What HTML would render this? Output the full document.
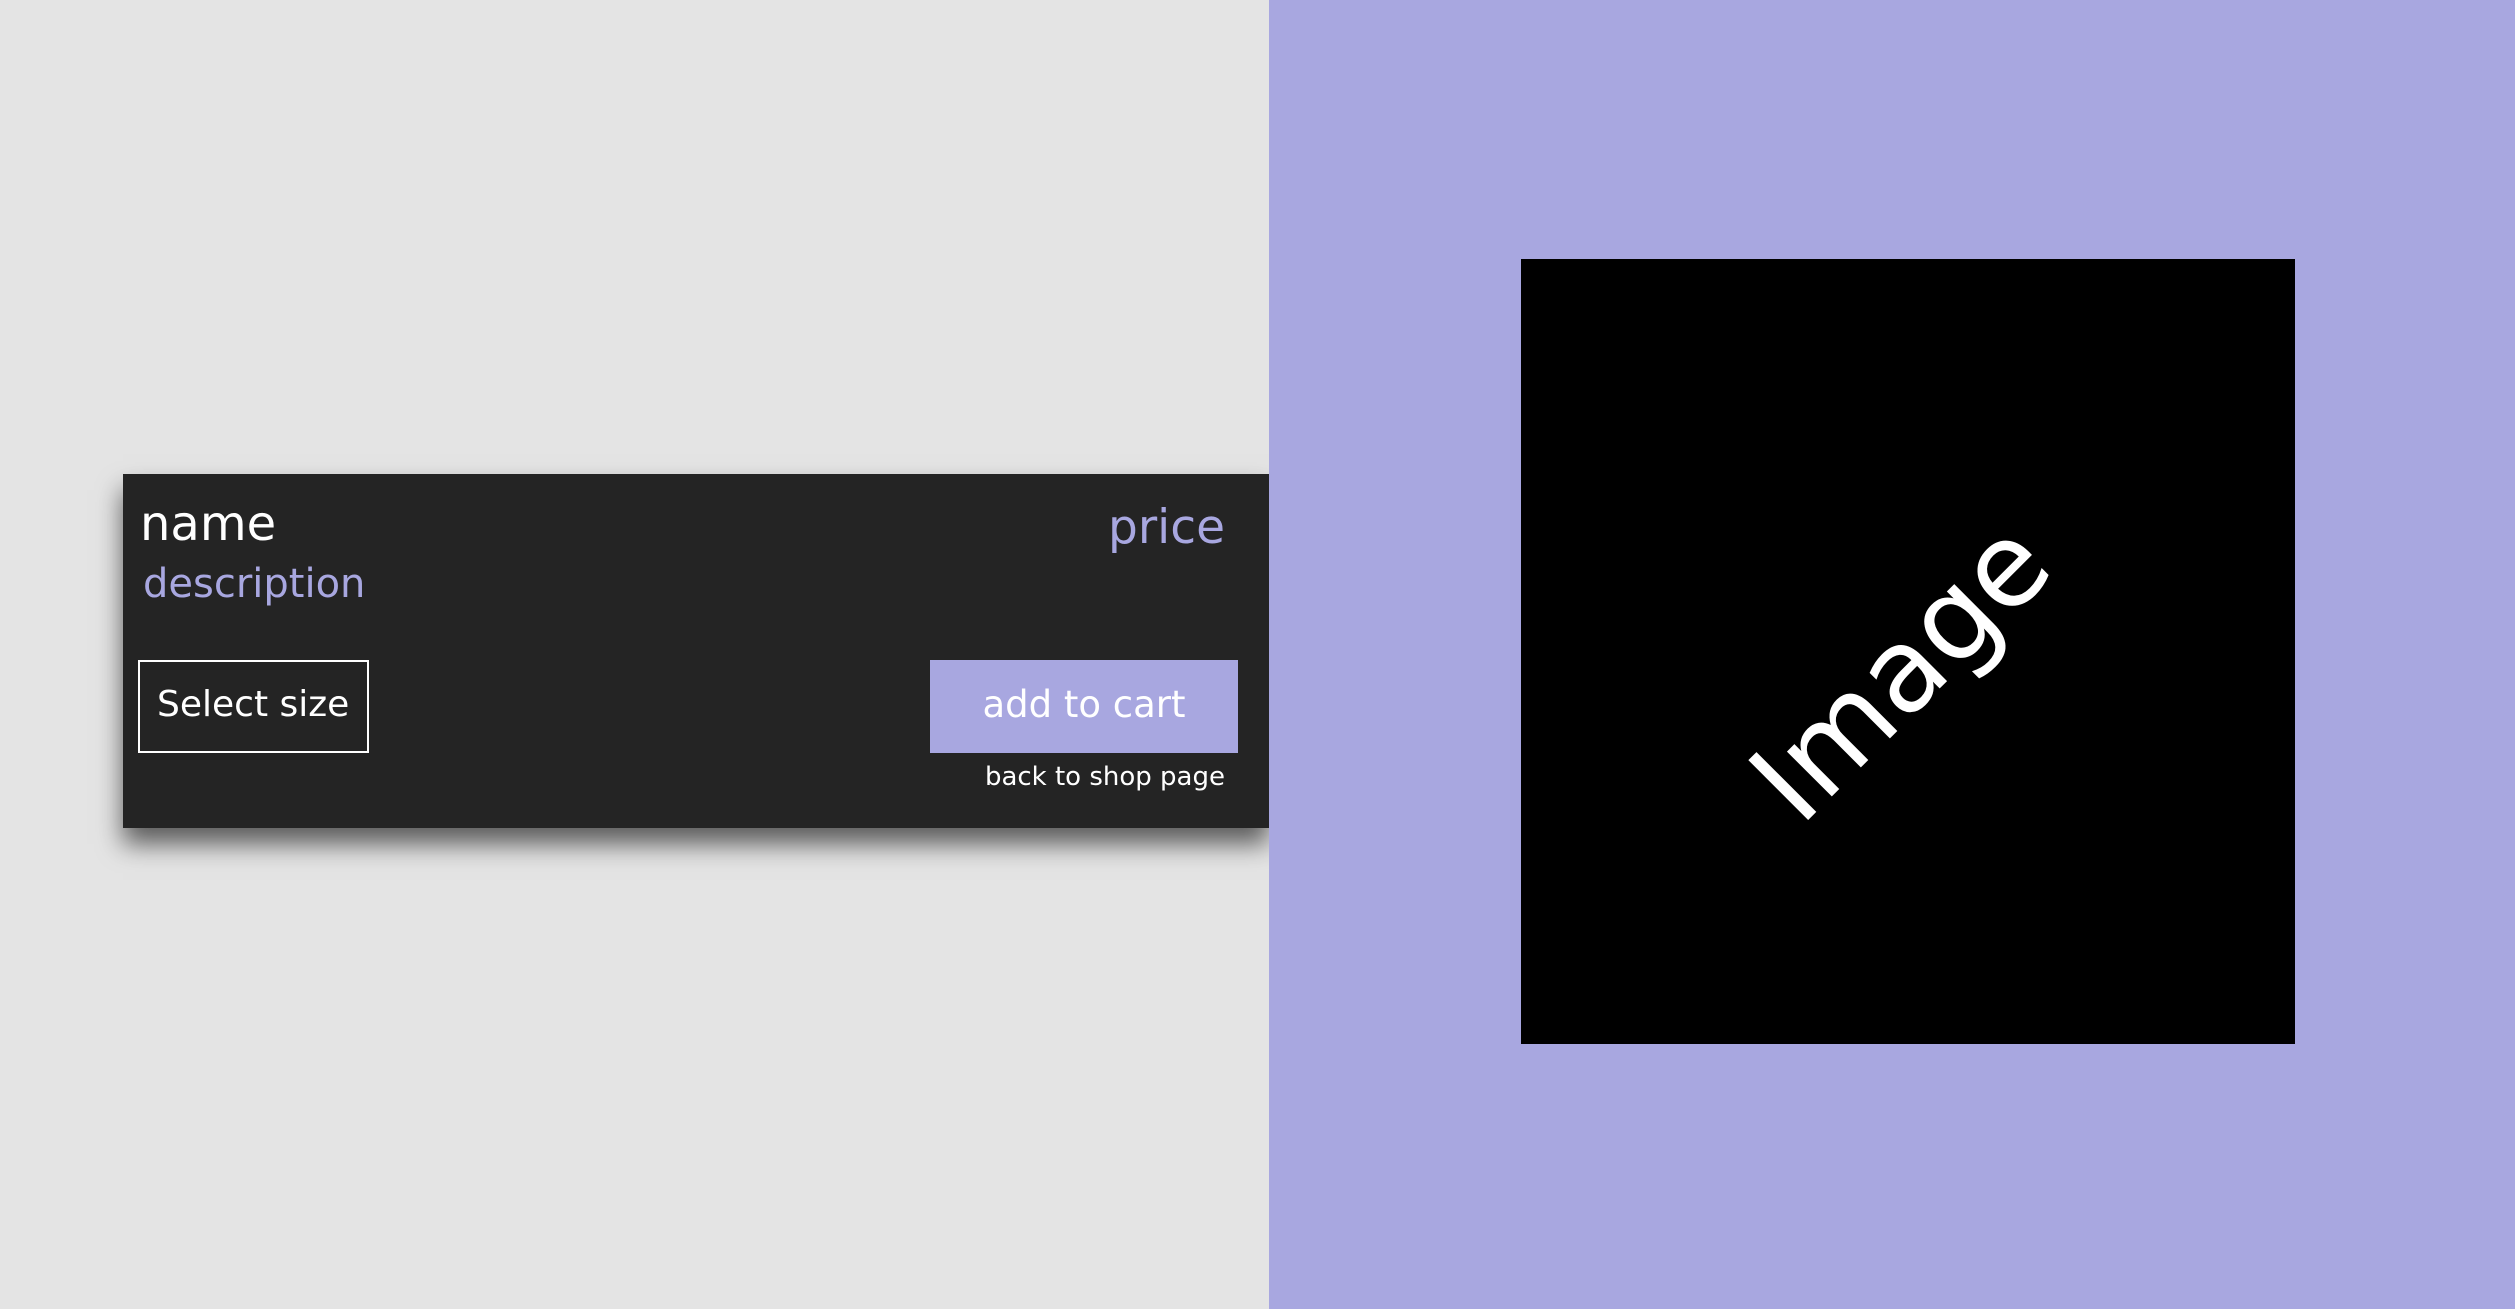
<!DOCTYPE html>
<html><head><style>
html,body{margin:0;padding:0;width:2515px;height:1309px;overflow:hidden;background:#e4e4e4;font-family:"DejaVu Sans","Liberation Sans",sans-serif;}
.right{position:absolute;left:1269px;top:0;width:1246px;height:1309px;background:#a8a7e0;}
.sq{position:absolute;left:1521px;top:259px;width:774px;height:785px;background:#000;}
.img{position:absolute;left:1901px;top:672px;transform:translate(-50%,-50%) rotate(-45deg);color:#fff;font-size:116px;white-space:nowrap;line-height:1;}
.card{position:absolute;left:123px;top:474px;width:1146px;height:354px;background:#242424;box-shadow:0 16px 24px rgba(0,0,0,0.6);}
.t{position:absolute;white-space:nowrap;line-height:1;}
</style></head><body>
<div class="card"></div>
<div class="right"></div>
<div class="t" style="left:140px;top:500px;font-size:48px;color:#fff;">name</div>
<div class="t" style="right:1290px;top:504px;font-size:47px;color:#a8a7e0;">price</div>
<div class="t" style="left:143px;top:564px;font-size:40px;color:#a8a7e0;">description</div>
<div style="position:absolute;left:138px;top:660px;width:227px;height:89px;border:2px solid #fff;"></div>
<div class="t" style="left:157px;top:687px;font-size:36px;color:#fff;">Select size</div>
<div style="position:absolute;left:930px;top:660px;width:308px;height:93px;background:#a8a7e0;"></div>
<div class="t" style="left:930px;width:308px;text-align:center;top:686px;font-size:37px;color:#fff;">add to cart</div>
<div class="t" style="right:1290px;top:764px;font-size:26px;color:#fff;">back to shop page</div>
<div class="sq"></div>
<div class="img">Image</div>
</body></html>
